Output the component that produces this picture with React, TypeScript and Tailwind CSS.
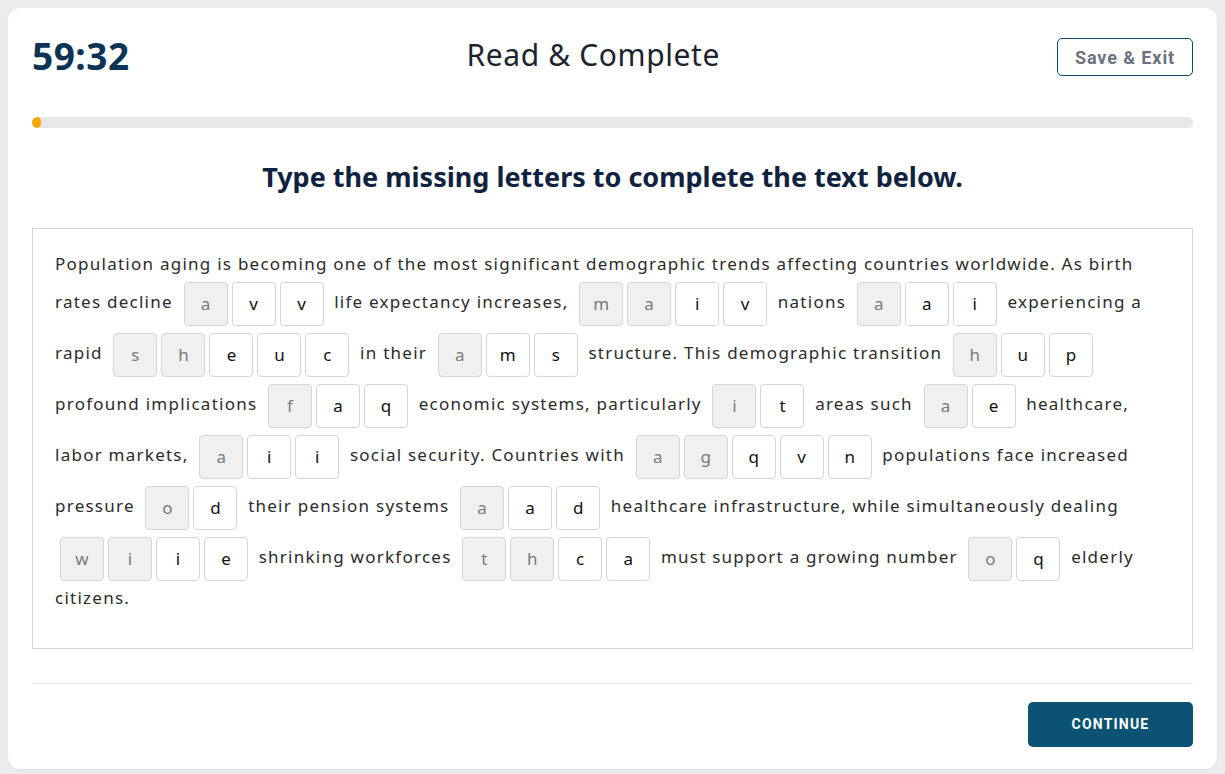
import type { ReactNode } from 'react';

type Cell = { ch: string; given?: boolean };
type Part = string | Cell[];

const g = (ch: string): Cell => ({ ch, given: true });
const e = (ch: string): Cell => ({ ch });

// passage pieces: plain text and groups of letter cells
const PASSAGE: Part[] = [
    'Population aging is becoming one of the most significant demographic trends affecting countries worldwide. As birth rates decline',
    [g('a'), e('v'), e('v')],
    'life expectancy increases,',
    [g('m'), g('a'), e('i'), e('v')],
    'nations',
    [g('a'), e('a'), e('i')],
    'experiencing a rapid',
    [g('s'), g('h'), e('e'), e('u'), e('c')],
    'in their',
    [g('a'), e('m'), e('s')],
    'structure. This demographic transition',
    [g('h'), e('u'), e('p')],
    'profound implications',
    [g('f'), e('a'), e('q')],
    'economic systems, particularly',
    [g('i'), e('t')],
    'areas such',
    [g('a'), e('e')],
    'healthcare, labor markets,',
    [g('a'), e('i'), e('i')],
    'social security. Countries with',
    [g('a'), g('g'), e('q'), e('v'), e('n')],
    'populations face increased pressure',
    [g('o'), e('d')],
    'their pension systems',
    [g('a'), e('a'), e('d')],
    'healthcare infrastructure, while simultaneously dealing',
    [g('w'), g('i'), e('i'), e('e')],
    'shrinking workforces',
    [g('t'), g('h'), e('c'), e('a')],
    'must support a growing number',
    [g('o'), e('q')],
    'elderly citizens.',
];

const LetterBox = ({ cell }: { cell: Cell }) => (
    <span
        className={`inline-flex items-center justify-center w-[44px] h-[44px] rounded-[4px] border border-[#d6d6d6] text-[17px] tracking-normal ${
            cell.given ? 'bg-[#f0f0f0] text-[#7a7a7a]' : 'bg-white text-[#111]'
        }`}
    >
        {cell.ch}
    </span>
);

export default function App() {
    const nodes: ReactNode[] = [];
    PASSAGE.forEach((part, i) => {
        if (typeof part === 'string') {
            nodes.push(<span key={i}>{part}</span>);
        } else {
            nodes.push(
                <span key={i} className="inline-flex gap-[4px] mx-[5px] my-[3.5px] align-middle">
                    {part.map((c, j) => (
                        <LetterBox key={j} cell={c} />
                    ))}
                </span>
            );
        }
        if (i < PASSAGE.length - 1) nodes.push(' ');
    });

    return (
        <div className="min-h-screen bg-[#ececef] p-[8px] pb-[6px]" style={{ fontFamily: '"Noto Sans", sans-serif' }}>
            <div className="bg-white rounded-[12px] shadow-[0_1px_3px_rgba(0,0,0,0.06)] px-[24px] pt-[30px] pb-[22px]">
                {/* Header */}
                <div className="flex items-center justify-between h-[38px]">
                    <div className="text-[37px] font-bold text-[#0b3356] tracking-[0.5px] leading-none -mt-[3px]">59:32</div>
                    <div className="text-[30px] text-[#1d2430] leading-none tracking-[0.6px] -mt-[4px]">Read &amp; Complete</div>
                    <button
                        className="h-[38px] w-[136px] rounded-[5px] border border-[#0d4b6b] text-[#6b7280] text-[18px] font-bold tracking-[0.9px]"
                        style={{ fontFamily: 'Roboto, sans-serif' }}
                    >
                        Save &amp; Exit
                    </button>
                </div>

                {/* Progress */}
                <div className="mt-[41px] h-[11px] rounded-full bg-[#e7e7ea] overflow-hidden">
                    <div className="h-full w-[9px] rounded-full bg-[#f5a800]" />
                </div>

                <h1 className="mt-[31px] text-center text-[27px] font-bold text-[#0f2340] leading-[36px]">
                    Type the missing letters to complete the text below.
                </h1>

                {/* Passage */}
                <div className="mt-[33px] border border-[#d4d4d4] pt-[21px] px-[22px] pb-[36px] text-[17px] leading-[28px] text-[#2b2b2b] tracking-[1.25px]">
                    {nodes}
                </div>

                <div className="mt-[34px] border-t border-[#e4e4e7]" />

                <div className="flex justify-end mt-[18px]">
                    <button
                        className="h-[45px] w-[165px] rounded-[5px] bg-[#0b5275] text-white text-[14px] font-bold tracking-[1.2px]"
                        style={{ fontFamily: 'Roboto, sans-serif' }}
                    >
                        CONTINUE
                    </button>
                </div>
            </div>
        </div>
    );
}
